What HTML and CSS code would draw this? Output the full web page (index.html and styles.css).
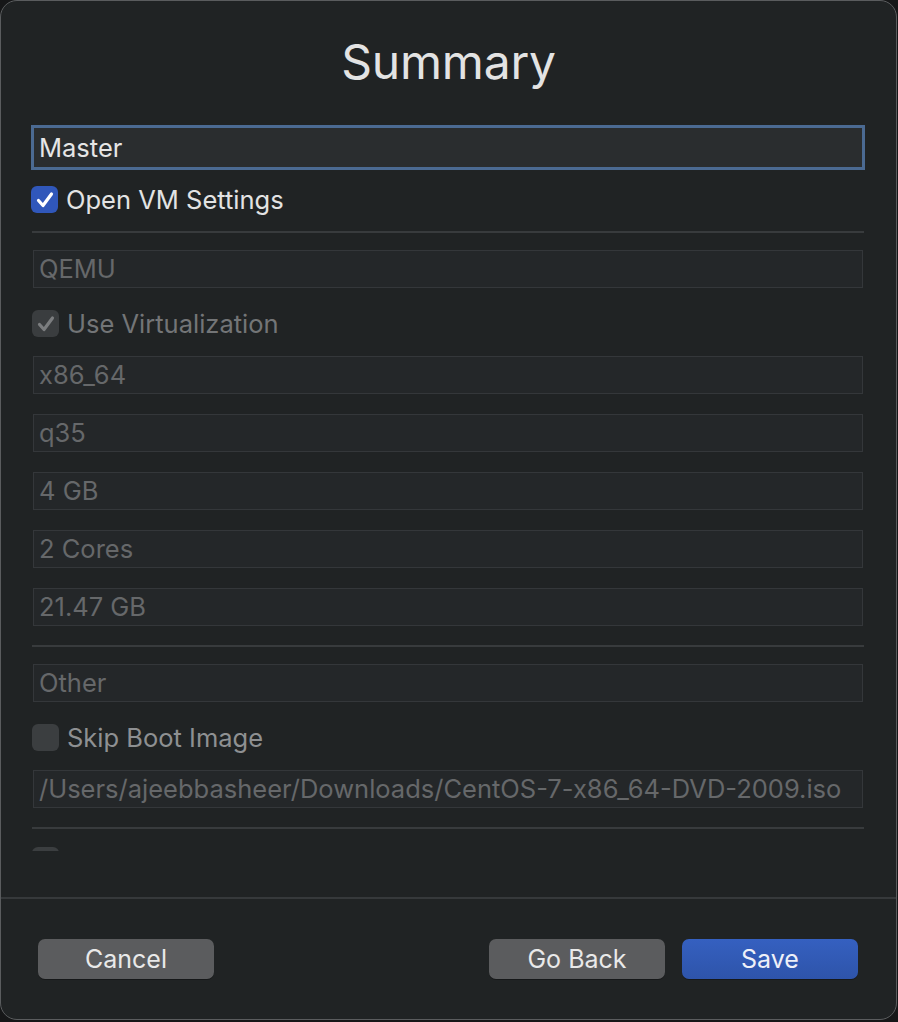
FILE: index.html
```html
<!DOCTYPE html>
<html>
<head>
<meta charset="utf-8">
<link rel="stylesheet" href="styles.css">
</head>
<body>
<div class="window">
  <h1 class="title">Summary</h1>
  <div class="name-field"><span>Master</span></div>
  <div class="check-row first">
    <span class="box checked"><svg viewBox="0 0 26 26" width="26" height="26"><path d="M6.5 13.5 L11 18.5 L19.5 7" fill="none" stroke="#fff" stroke-width="3.2" stroke-linecap="round" stroke-linejoin="round"/></svg></span>
    <span class="label">Open VM Settings</span>
  </div>
  <div class="scroll">
    <div class="sep"></div>
    <div class="field">QEMU</div>
    <div class="check-row dis">
      <span class="box disabled"><svg viewBox="0 0 26 26" width="26" height="26"><path d="M6.5 13.5 L11 18.5 L19.5 7" fill="none" stroke="#7b7d7f" stroke-width="3.2" stroke-linecap="round" stroke-linejoin="round"/></svg></span>
      <span class="label">Use Virtualization</span>
    </div>
    <div class="field">x86_64</div>
    <div class="field">q35</div>
    <div class="field">4 GB</div>
    <div class="field">2 Cores</div>
    <div class="field">21.47 GB</div>
    <div class="sep"></div>
    <div class="field">Other</div>
    <div class="check-row skip">
      <span class="box empty"></span>
      <span class="label">Skip Boot Image</span>
    </div>
    <div class="field">/Users/ajeebbasheer/Downloads/CentOS-7-x86_64-DVD-2009.iso</div>
    <div class="sep"></div>
    <div class="check-row dis">
      <span class="box empty"></span>
    </div>
  </div>
  <div class="footer">
    <button class="btn">Cancel</button>
    <div class="right">
      <button class="btn">Go Back</button>
      <button class="btn primary">Save</button>
    </div>
  </div>
</div>
</body>
</html>
```

FILE: styles.css
```css
html, body {
  margin: 0;
  padding: 0;
  background: #161718;
}
body {
  width: 898px;
  height: 1022px;
  overflow: hidden;
  font-family: Inter, "Noto Sans", "Liberation Sans", sans-serif;
}
.window {
  box-sizing: border-box;
  width: 897px;
  height: 1020px;
  background: #202324;
  border: 1px solid #5a5c5e;
  border-radius: 17px;
  display: flex;
  flex-direction: column;
  overflow: hidden;
}
.title {
  margin: 28px 0 0 0;
  text-align: center;
  font-weight: 400;
  font-size: 48px;
  line-height: 66px;
  color: #e3e3e3;
  letter-spacing: -0.2px;
}
.name-field {
  margin: 30px 31px 0 30px;
  height: 45px;
  box-sizing: border-box;
  border: 3px solid #4b6a92;
  background: #2a2d2f;
  display: flex;
  align-items: center;
  padding-left: 5px;
  font-size: 25.5px;
  color: #e6e6e6;
}
.check-row {
  display: flex;
  align-items: center;
  gap: 8px;
  height: 27px;
  margin-left: 30px;
  font-size: 25.5px;
}
.check-row.first {
  margin-top: 16px;
  margin-left: 30px;
}
.check-row .label {
  color: #e3e3e3;
}
.check-row.dis .label {
  color: #737577;
}
.check-row.skip .label {
  color: #8e9092;
}
.box {
  width: 27px;
  height: 27px;
  box-sizing: border-box;
  border-radius: 6px;
  display: flex;
  align-items: center;
  justify-content: center;
  flex: none;
}
.box svg {
  display: block;
}
.box.checked {
  background: #3057ba;
}
.box.disabled {
  background: #3a3d3f;
}
.box.empty {
  background: #3b3e40;
}
.scroll {
  height: 638px;
  overflow: hidden;
  margin: 0 32px 0 31px;
  flex: none;
}
.sep {
  height: 2px;
  background: #383b3d;
  margin-top: 18px;
}
.field + .sep {
  margin-top: 19px;
}
.scroll .check-row {
  margin-left: 0;
  margin-top: 22px;
}
.scroll .sep + .check-row {
  margin-top: 18px;
}
.field {
  height: 38px;
  box-sizing: border-box;
  margin: 20px 1px 0 1px;
  border: 1px solid #34373a;
  background: #242729;
  color: #66686a;
  font-size: 25.5px;
  line-height: 36px;
  padding-left: 5px;
  white-space: nowrap;
  overflow: hidden;
}
.check-row + .field {
  margin-top: 19px;
}
.sep + .field {
  margin-top: 17px;
}
.footer {
  margin-top: auto;
  border-top: 2px solid #36393b;
  height: 122px;
  box-sizing: border-box;
  display: flex;
  justify-content: space-between;
  align-items: flex-start;
  padding: 40px 38px 0 37px;
}
.right {
  display: flex;
  gap: 17px;
}
.btn {
  width: 176px;
  height: 40px;
  border: none;
  border-radius: 7px;
  background: #5b5c5e;
  color: #e9e9e9;
  font-family: Inter, "Noto Sans", "Liberation Sans", sans-serif;
  font-size: 25px;
  padding: 0;
  box-shadow: 0 1px 0 rgba(0,0,0,0.3);
}
.btn.primary {
  background: linear-gradient(#3560c0, #2e54aa);
  color: #eef0f8;
}
```
